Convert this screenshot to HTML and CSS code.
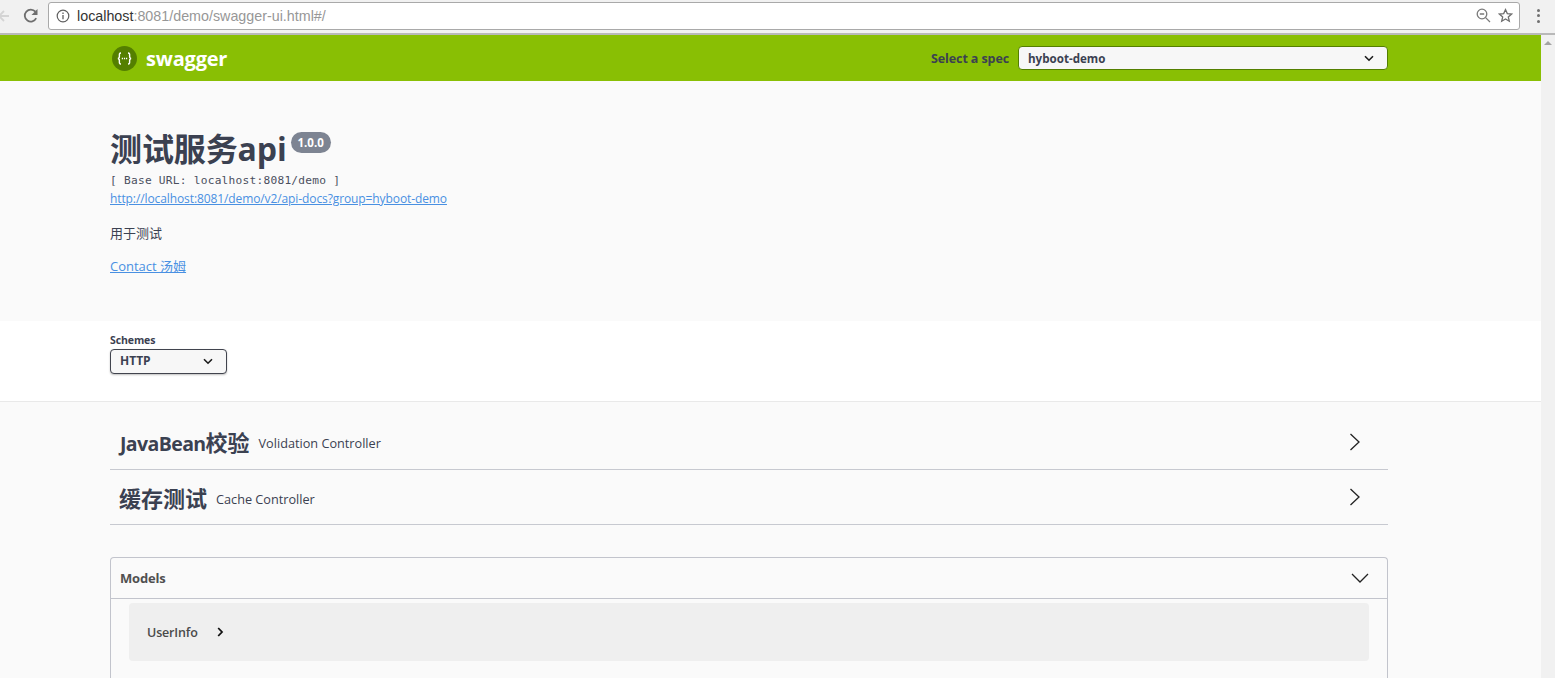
FILE: index.html
```html
<!DOCTYPE html>
<html lang="zh">
<head>
<meta charset="utf-8">
<title>Swagger UI</title>
<link rel="stylesheet" href="styles.css">
</head>
<body>
<div class="chrome">
  <svg class="nav-back" width="12" height="14" viewBox="0 0 12 14"><path d="M11 7H1M6 2L1 7l5 5" fill="none" stroke="#d4d4d4" stroke-width="1.8"/></svg>
  <svg class="nav-reload" width="16" height="16" viewBox="0 0 16 16"><path d="M13.2 10.2A6 6 0 1 1 12.4 3.7" fill="none" stroke="#6e6e6e" stroke-width="1.8"/><path d="M14.5 1v6h-6z" fill="#6e6e6e"/></svg>
  <div class="omnibox">
    <svg class="info-icon" width="14" height="14" viewBox="0 0 14 14"><circle cx="7" cy="7" r="5.8" fill="none" stroke="#5f5f5f" stroke-width="1.2"/><path d="M7 6v4.2M7 3.6v1.3" stroke="#5f5f5f" stroke-width="1.3"/></svg>
    <div class="url"><span class="host">localhost</span>:8081/demo/swagger-ui.html#/</div>
    <svg class="zoom-icon" width="15" height="15" viewBox="0 0 15 15"><circle cx="6" cy="6" r="4.8" fill="none" stroke="#7a7a7a" stroke-width="1.3"/><path d="M3.8 6h4.4M9.6 9.6L14 14" stroke="#7a7a7a" stroke-width="1.3"/></svg>
    <svg class="star-icon" width="15" height="15" viewBox="0 0 15 15"><path d="M7.5 1.6l1.8 4 4.3.4-3.3 2.9 1 4.3-3.8-2.3-3.8 2.3 1-4.3L1.4 6l4.3-.4z" fill="none" stroke="#6e6e6e" stroke-width="1.3"/></svg>
  </div>
  <div class="menu-dots"><i></i><i></i><i></i></div>
</div>

<div class="viewport">
  <main class="page">
    <header class="topbar">
      <div class="topbar-inner">
        <div class="brand">
          <svg class="logo" width="25" height="25" viewBox="0 0 25 25"><circle cx="12.5" cy="12.5" r="12.5" fill="#547f00"/><path d="M9 7c-2 0-1.600 1.600-1.600 3.200 0 1.500-.4 2.300-1.600 2.300 1.200 0 1.600.8 1.600 2.300 0 1.600-.4 3.200 1.600 3.200M16 7c2 0 1.600 1.600 1.600 3.200 0 1.500.4 2.300 1.600 2.300-1.200 0-1.600.8-1.600 2.300 0 1.600.4 3.200-1.600 3.200" fill="none" stroke="#fff" stroke-width="1.400"/><path d="M9.800 12.500h1.200M11.900 12.500h1.200M14 12.500h1.200" stroke="#fff" stroke-width="1.300"/></svg>
          <span class="brand-name">swagger</span>
        </div>
        <div class="spec">
          <span class="spec-label">Select a spec</span>
          <div class="select spec-select">
            <span>hyboot-demo</span>
            <svg class="caret" width="10" height="7" viewBox="0 0 10 7"><path d="M1 1.200l4 4 4-4" fill="none" stroke="#1c1c1c" stroke-width="1.600"/></svg>
          </div>
        </div>
      </div>
    </header>

    <section class="info">
      <div class="title-row">
        <h1>测试服务api</h1>
        <span class="version">1.0.0</span>
      </div>
      <div class="base-url">[ Base URL: localhost:8081/demo ]</div>
      <a class="docs-link" href="#">http://localhost:8081/demo/v2/api-docs?group=hyboot-demo</a>
      <p class="desc">用于测试</p>
      <a class="contact" href="#">Contact 汤姆</a>
    </section>

    <section class="schemes">
      <div class="schemes-label">Schemes</div>
      <div class="select scheme-select">
        <span>HTTP</span>
        <svg class="caret" width="10" height="7" viewBox="0 0 10 7"><path d="M1 1.200l4 4 4-4" fill="none" stroke="#1c1c1c" stroke-width="1.600"/></svg>
      </div>
    </section>

    <section class="content">
      <div class="tag tag-first">
        <h2><span class="latin">JavaBean</span>校验</h2><span class="tag-desc">Volidation Controller</span>
        <svg class="tag-arrow" width="12" height="18" viewBox="0 0 12 18"><path d="M1.500 1l8.500 8-8.500 8" fill="none" stroke="#222" stroke-width="1.300"/></svg>
      </div>
      <div class="tag tag-second">
        <h2>缓存测试</h2><span class="tag-desc">Cache Controller</span>
        <svg class="tag-arrow" width="12" height="18" viewBox="0 0 12 18"><path d="M1.500 1l8.500 8-8.500 8" fill="none" stroke="#222" stroke-width="1.300"/></svg>
      </div>

      <div class="models">
        <div class="models-head">
          <span class="models-title">Models</span>
          <svg width="18" height="12" viewBox="0 0 18 12"><path d="M1 2l8 8 8-8" fill="none" stroke="#222" stroke-width="1.300"/></svg>
        </div>
        <div class="model-box">
          <span class="model-name">UserInfo</span>
          <svg width="7" height="10" viewBox="0 0 7 10"><path d="M1.200 1l3.800 4-3.800 4" fill="none" stroke="#111" stroke-width="1.800"/></svg>
        </div>
      </div>
    </section>
  </main>
  <aside class="scrollbar"><div class="scroll-up"></div></aside>
</div>
</body>
</html>
```

FILE: styles.css
```css
* { box-sizing: border-box; }
html, body { margin: 0; height: 678px; overflow: hidden; }
body { background: #fafafa; font-family: "Open Sans", "Noto Sans CJK SC", sans-serif; color: #3b4151; }

.chrome { height: 35px; background: #f1f1f1; border-bottom: 2px solid #b9b9b9; display: flex; align-items: center; padding-bottom: 2px; }
.nav-back { margin-left: -2px; flex: none; }
.nav-reload { margin-left: 13px; flex: none; }
.omnibox { width: 1472px; height: 28px; margin-left: 9px; background: #fff; border: 1px solid #a9a9a9; border-radius: 3px; display: flex; align-items: center; padding: 0 6px 0 7px; flex: none; }
.url { font-family: "Liberation Sans", sans-serif; font-size: 14.300px; color: #979797; margin-left: 7px; flex: 1; }
.host { color: #333; }
.star-icon { margin-left: 7px; margin-right: 0; }
.menu-dots { display: flex; flex-direction: column; gap: 2.500px; margin-left: 17px; }
.menu-dots i { display: block; width: 3px; height: 3px; border-radius: 50%; background: #707070; }

.viewport { display: flex; height: 643px; overflow: hidden; }
.page { width: 1541px; flex: none; }
.scrollbar { width: 14px; background: #f1f1f1; flex: none; padding: 6px 0 0 3px; }
.scroll-up { width: 0; height: 0; border-left: 4px solid transparent; border-right: 4px solid transparent; border-bottom: 4px solid #a3a3a3; }

.topbar { height: 46px; background: #89bf04; padding-left: 110px; }
.topbar-inner { width: 1278px; height: 46px; display: flex; align-items: center; justify-content: space-between; }
.brand { display: flex; align-items: center; margin-left: 2px; }
.brand-name { font-family: "Open Sans", sans-serif; font-weight: 700; font-size: 20px; color: #fff; margin-left: 9px; letter-spacing: -.2px; }
.spec { display: flex; align-items: center; }
.spec-label { font-size: 12.500px; font-weight: 700; color: #3b4151; margin-right: 9px; letter-spacing: -.1px; }
.select { background: #f7f7f7; border-radius: 4px; display: flex; align-items: center; justify-content: space-between; font-weight: 700; font-size: 11.600px; color: #3b4151; }
.spec-select { width: 370px; height: 24px; border: 1px solid #547f00; padding: 0 13px 0 9px; }
.scheme-select { width: 117px; height: 25px; border: 1.500px solid #41444e; padding: 0 13px 3px 9px; box-shadow: 0 1px 2px rgba(0,0,0,.25); font-size: 12px; }
.scheme-select .caret { position: relative; top: 1px; }

.info { height: 240px; padding: 49px 0 0 110px; background: #fafafa; }
.title-row { display: flex; align-items: flex-start; height: 38px; }
h1 { margin: 0; font-size: 32px; line-height: 37px; font-weight: 700; color: #3b4151; letter-spacing: -.1px; }
.version { margin: 2px 0 0 4px; height: 21px; width: 40px; border-radius: 11px; background: #7d8492; color: #fff; font-size: 11.500px; font-weight: 700; line-height: 21px; text-align: center; }
.base-url { font-family: "DejaVu Sans Mono", monospace; font-size: 11.200px; line-height: 14px; margin-top: 6px; color: #4a4f5e; letter-spacing: .24px; }
.docs-link, .contact { display: block; width: max-content; color: #4990e2; }
.docs-link { font-size: 12px; line-height: 17px; margin-top: 2px; letter-spacing: -.1px; }
.desc { margin: 18px 0 0; font-size: 13px; line-height: 17px; color: #3b4151; }
.contact { margin-top: 16px; line-height: 17px; font-size: 13px; }

.schemes { height: 81px; background: #fff; border-bottom: 1px solid #e9e9e9; padding: 12px 0 0 110px; }
.schemes-label { font-size: 10.500px; font-weight: 700; line-height: 14px; letter-spacing: -.1px; }
.scheme-select { margin-top: 2px; }

.content { padding: 0 0 0 110px; width: 1388px; }
.tag { display: flex; align-items: center; border-bottom: 1px solid #c7c9d0; padding: 0 27px 0 9px; }
.tag-first { height: 68px; padding-top: 14px; padding-left: 10px; }
.tag-second { height: 55px; padding-top: 2px; }
h2 { margin: 0; font-size: 22px; line-height: 30px; font-weight: 700; color: #3b4151; }
.latin { font-size: 19.500px; letter-spacing: -.6px; }
.tag-desc { margin-left: 9px; font-size: 12.700px; color: #3b4151; flex: 1; }
.tag-second .tag-desc { position: relative; top: 1px; }
.tag-arrow { position: relative; top: -1px; }

.models { margin-top: 32px; height: 130px; border: 1px solid #c2c4cc; border-bottom: 0; border-radius: 4px 4px 0 0; }
.models-head { height: 41px; border-bottom: 1px solid #c2c4cc; display: flex; align-items: center; justify-content: space-between; padding: 0 18px 0 9px; }
.models-title { font-size: 13px; font-weight: 700; color: #505050; letter-spacing: -.2px; }
.model-box { margin: 4px 18px 0; height: 58px; background: #efefef; border-radius: 4px; display: flex; align-items: center; padding: 0 0 0 18px; }
.model-name { font-size: 12.500px; font-weight: 600; color: #4a4a4a; margin-right: 19px; letter-spacing: -.15px; }
```
